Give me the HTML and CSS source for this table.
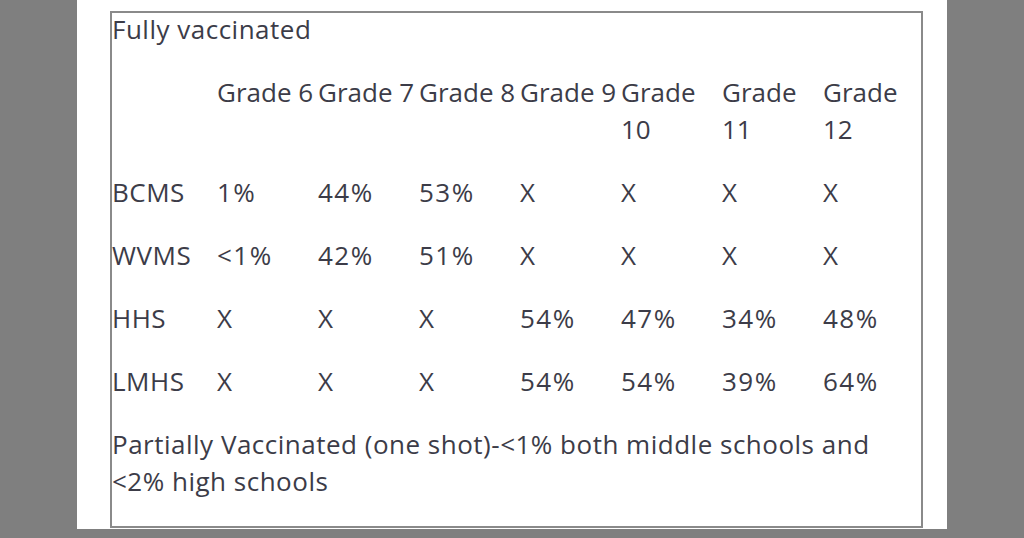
FILE: index.html
```html
<!DOCTYPE html>
<html lang="en">
<head>
<meta charset="utf-8">
<title>Fully vaccinated</title>
<link rel="stylesheet" href="styles.css">
</head>
<body>
<div class="page">
  <div class="box">
    <p class="title">Fully vaccinated</p>
    <table class="grid">
      <colgroup>
        <col class="c-label">
        <col class="c-val"><col class="c-val"><col class="c-val"><col class="c-val">
        <col class="c-val"><col class="c-val"><col class="c-val">
      </colgroup>
      <tr class="head">
        <td></td>
        <td>Grade 6</td><td>Grade 7</td><td>Grade 8</td><td>Grade 9</td>
        <td>Grade<br>10</td><td>Grade<br>11</td><td>Grade<br>12</td>
      </tr>
      <tr>
        <td>BCMS</td><td>1%</td><td>44%</td><td>53%</td><td>X</td><td>X</td><td>X</td><td>X</td>
      </tr>
      <tr>
        <td>WVMS</td><td>&lt;1%</td><td>42%</td><td>51%</td><td>X</td><td>X</td><td>X</td><td>X</td>
      </tr>
      <tr>
        <td>HHS</td><td>X</td><td>X</td><td>X</td><td>54%</td><td>47%</td><td>34%</td><td>48%</td>
      </tr>
      <tr>
        <td>LMHS</td><td>X</td><td>X</td><td>X</td><td>54%</td><td>54%</td><td>39%</td><td>64%</td>
      </tr>
    </table>
    <p class="note">Partially Vaccinated (one shot)-&lt;1% both middle schools and<br>&lt;2% high schools</p>
  </div>
</div>
</body>
</html>
```

FILE: styles.css
```css
html, body {
  margin: 0;
  padding: 0;
}
body {
  background: #7f7f7f;
  height: 538px;
  overflow: hidden;
  font-family: "Open Sans", "Lato", sans-serif;
  font-size: 26px;
  letter-spacing: 0.5px;
  color: #3c3c48;
}
.page {
  margin-left: 77px;
  width: 870px;
  height: 529px;
  background: #fff;
  padding-top: 11px;
  box-sizing: border-box;
}
.box {
  margin-left: 33px;
  width: 813px;
  height: 517px;
  box-sizing: border-box;
  border: 2px solid #8a8a8a;
  padding: 0;
}
.title, .note {
  margin: 0;
  line-height: 37px;
}
.title {
  margin-top: -2px;
}
.grid {
  border-collapse: collapse;
  table-layout: fixed;
  width: 809px;
  margin-top: 26px;
}
.c-label { width: 105px; }
.c-val { width: 101px; }
.grid td {
  padding: 0 0 26px 0;
  line-height: 37px;
  vertical-align: top;
  white-space: nowrap;
  letter-spacing: 1.5px;
}
.grid td:first-child {
  letter-spacing: 0.5px;
}
.grid .head td {
  letter-spacing: 0;
}
```
